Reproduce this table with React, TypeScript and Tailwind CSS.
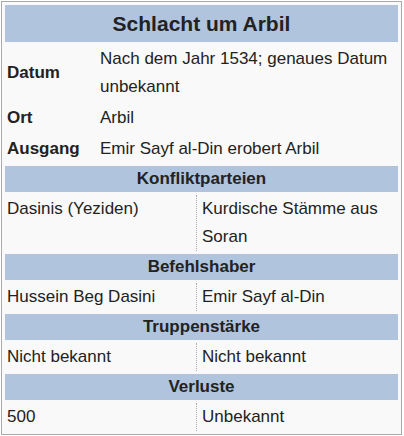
const sans = { fontFamily: '"Liberation Sans", Arial, sans-serif' }

type Pair = [string, string]

const facts: Pair[] = [
  ['Datum', 'Nach dem Jahr 1534; genaues Datum unbekannt'],
  ['Ort', 'Arbil'],
  ['Ausgang', 'Emir Sayf al-Din erobert Arbil'],
]

const sections: { title: string; row: Pair }[] = [
  { title: 'Konfliktparteien', row: ['Dasinis (Yeziden)', 'Kurdische Stämme aus Soran'] },
  { title: 'Befehlshaber', row: ['Hussein Beg Dasini', 'Emir Sayf al-Din'] },
  { title: 'Truppenstärke', row: ['Nicht bekannt', 'Nicht bekannt'] },
  { title: 'Verluste', row: ['500', 'Unbekannt'] },
]

function SectionHeader({ children }: { children: string }) {
  return (
    <div className="flex h-[26px] items-center justify-center bg-[#b0c4de] text-[17px] font-bold text-[#222]">
      {children}
    </div>
  )
}

export default function App() {
  return (
    <div className="p-px" style={sans}>
      <div className="flex w-[401px] flex-col gap-[3px] border border-[#aaa] bg-[#f9f9f9] p-[3px] text-[17px] leading-[28px] text-[#222]">
        <div className="flex h-[37px] items-center justify-center bg-[#b0c4de] text-[21px] font-bold">
          Schlacht um Arbil
        </div>

        {facts.map(([label, value]) => (
          <div key={label} className="grid grid-cols-[90px_1fr] gap-x-[3px]">
            <div className="flex items-center pl-0.5 font-bold">{label}</div>
            <div className="pl-0.5">{value}</div>
          </div>
        ))}

        {sections.map((s) => (
          <div key={s.title} className="flex flex-col gap-[3px]">
            <SectionHeader>{s.title}</SectionHeader>
            <div className="grid grid-cols-[192px_1fr] gap-x-[3px]">
              <div className="border-r border-dotted border-[#aaa] pl-0.5">{s.row[0]}</div>
              <div className="pl-0.5">{s.row[1]}</div>
            </div>
          </div>
        ))}
      </div>
    </div>
  )
}
